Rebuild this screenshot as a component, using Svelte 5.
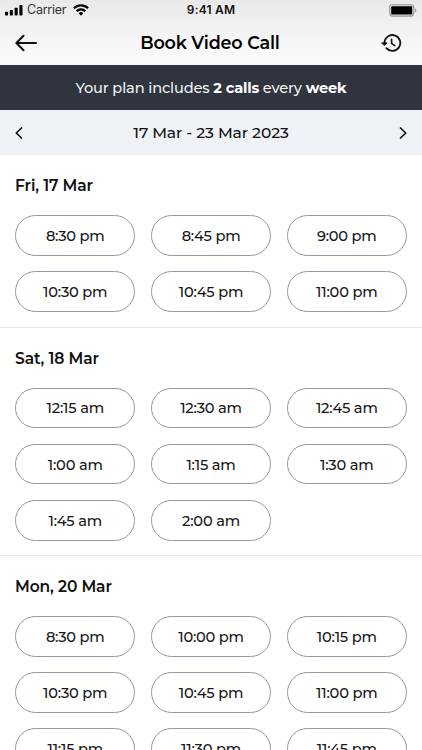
<script>
  const days = [
    { title: 'Fri, 17 Mar', slots: ['8:30 pm', '8:45 pm', '9:00 pm', '10:30 pm', '10:45 pm', '11:00 pm'] },
    { title: 'Sat, 18 Mar', slots: ['12:15 am', '12:30 am', '12:45 am', '1:00 am', '1:15 am', '1:30 am', '1:45 am', '2:00 am'] },
    { title: 'Mon, 20 Mar', slots: ['8:30 pm', '10:00 pm', '10:15 pm', '10:30 pm', '10:45 pm', '11:00 pm', '11:15 pm', '11:30 pm', '11:45 pm'] }
  ];
</script>

<div class="screen">
  <header>
    <div class="status">
      <div class="left">
        <svg class="signal" width="18" height="11" viewBox="0 0 18 11">
          <rect x="0" y="6.8" width="3.1" height="3.7" rx=".7" />
          <rect x="4.8" y="5" width="3.1" height="5.5" rx=".7" />
          <rect x="9.6" y="2.7" width="3.1" height="7.8" rx=".7" />
          <rect x="14.4" y="0" width="3.1" height="10.5" rx=".7" />
        </svg>
        <span class="carrier">Carrier</span>
        <svg class="wifi" width="16" height="12" viewBox="0 0 16 12" fill="none" stroke="#000" stroke-width="2.1">
          <path d="M.9 4.3a10.1 10.1 0 0 1 14.2 0" />
          <path d="M3.6 7.2a6.2 6.2 0 0 1 8.8 0" />
          <path d="M8 11.7 5.6 9.3a3.4 3.4 0 0 1 4.8 0z" fill="#000" stroke="none" />
        </svg>
      </div>
      <span class="clock">9:41 AM</span>
      <svg class="battery" width="28" height="13" viewBox="0 0 28 13">
        <rect x=".7" y=".7" width="24" height="11.4" rx="2.8" fill="#ddd" stroke="#999" stroke-width="1.1" />
        <rect x="2.2" y="2.2" width="21" height="8.4" rx="1.2" />
        <path d="M26 4.4q1.5.6 1.5 2T26 8.4z" fill="#999" />
      </svg>
    </div>
    <div class="bar">
      <svg width="24" height="20" viewBox="0 0 24 20" fill="none" stroke="#111" stroke-width="2" stroke-linecap="round" stroke-linejoin="round">
        <path d="M21 10H1.7M8.5 2.8 1.4 10l7.1 7.2" />
      </svg>
      <h1>Book Video Call</h1>
      <svg width="21" height="20" viewBox="0 0 21 20" fill="none" stroke="#111" stroke-width="1.8" stroke-linecap="round" stroke-linejoin="round">
        <path d="M3.5 10A7.9 7.9 0 1 1 5.4 15.1" />
        <path d="M1 9.9h5L3.5 12.3z" fill="#111" stroke-width="1" />
        <path d="M10.6 6.3v4.1l3.2 2.2" stroke-width="1.6" />
      </svg>
    </div>
  </header>
  <div class="plan"><span>Your plan includes <b>2 calls</b> every <b>week</b></span></div>
  <nav>
    <svg width="8" height="12" viewBox="0 0 8 12"><path d="M6.5 1 1.3 6l5.2 5" /></svg>
    <span>17 Mar - 23 Mar 2023</span>
    <svg width="8" height="12" viewBox="0 0 8 12"><path d="m1.5 1 5.2 5-5.2 5" /></svg>
  </nav>
  <main>
    {#each days as day}
      <section>
        <h2>{day.title}</h2>
        <div class="slots">
          {#each day.slots as slot}
            <button>{slot}</button>
          {/each}
        </div>
      </section>
    {/each}
  </main>
</div>

<style>
  .screen { width: 422px; height: 750px; overflow: hidden; background: #fff; color: #111; font-family: Montserrat, Inter, "Liberation Sans", sans-serif; }
  svg { display: block; flex: none; }
  header { height: 65px; box-sizing: border-box; background: linear-gradient(#e9e9e9, #f8f8f8 48px, #f9f9f9); }
  .status { height: 20px; display: grid; grid-template-columns: 1fr auto 1fr; align-items: center; padding: 0 5px 0 5px; box-sizing: border-box; }
  .left { display: flex; align-items: center; }
  .carrier { margin: 0 7px 0 4px; font: 12.5px/20px Inter, sans-serif; letter-spacing: -.25px; color: #333; }
  .clock { font: 600 12px/20px Inter, sans-serif; letter-spacing: .2px; color: #111; }
  .battery { justify-self: end; }
  .bar { height: 45px; display: flex; align-items: center; justify-content: space-between; padding: 0 20px 0 15px; }
  h1 { margin: 0; font-size: 17.6px; line-height: 24px; font-weight: 600; letter-spacing: -.2px; color: #050505; }
  .plan { height: 45px; display: flex; align-items: center; justify-content: center; background: #30343f; color: #eef0f3; font-size: 14.6px; font-weight: 500; letter-spacing: -.15px; white-space: pre; }
  b { font-weight: 700; color: #fff; }
  nav { height: 45px; display: flex; align-items: center; justify-content: space-between; padding: 0 15px; background: #eef2f6; font-size: 15.5px; font-weight: 500; letter-spacing: -.1px; }
  nav path { fill: none; stroke: #111; stroke-width: 1.7; stroke-linecap: round; stroke-linejoin: round; }
  section { padding: 19px 15px 14.7px; border-bottom: 1px solid #e6e7e9; }
  h2 { margin: 0 0 17px; font-size: 15.5px; line-height: 24px; font-weight: 600; letter-spacing: -.1px; }
  .slots { display: grid; grid-template-columns: repeat(3, 1fr); gap: 15.3px; }
  button { height: 40.8px; padding: 1px 0 0; border: 1px solid #9298a5; border-radius: 21px; background: transparent; color: #171717; font: 500 14.6px Montserrat, Inter, "Liberation Sans", sans-serif; letter-spacing: -.2px; }
</style>
